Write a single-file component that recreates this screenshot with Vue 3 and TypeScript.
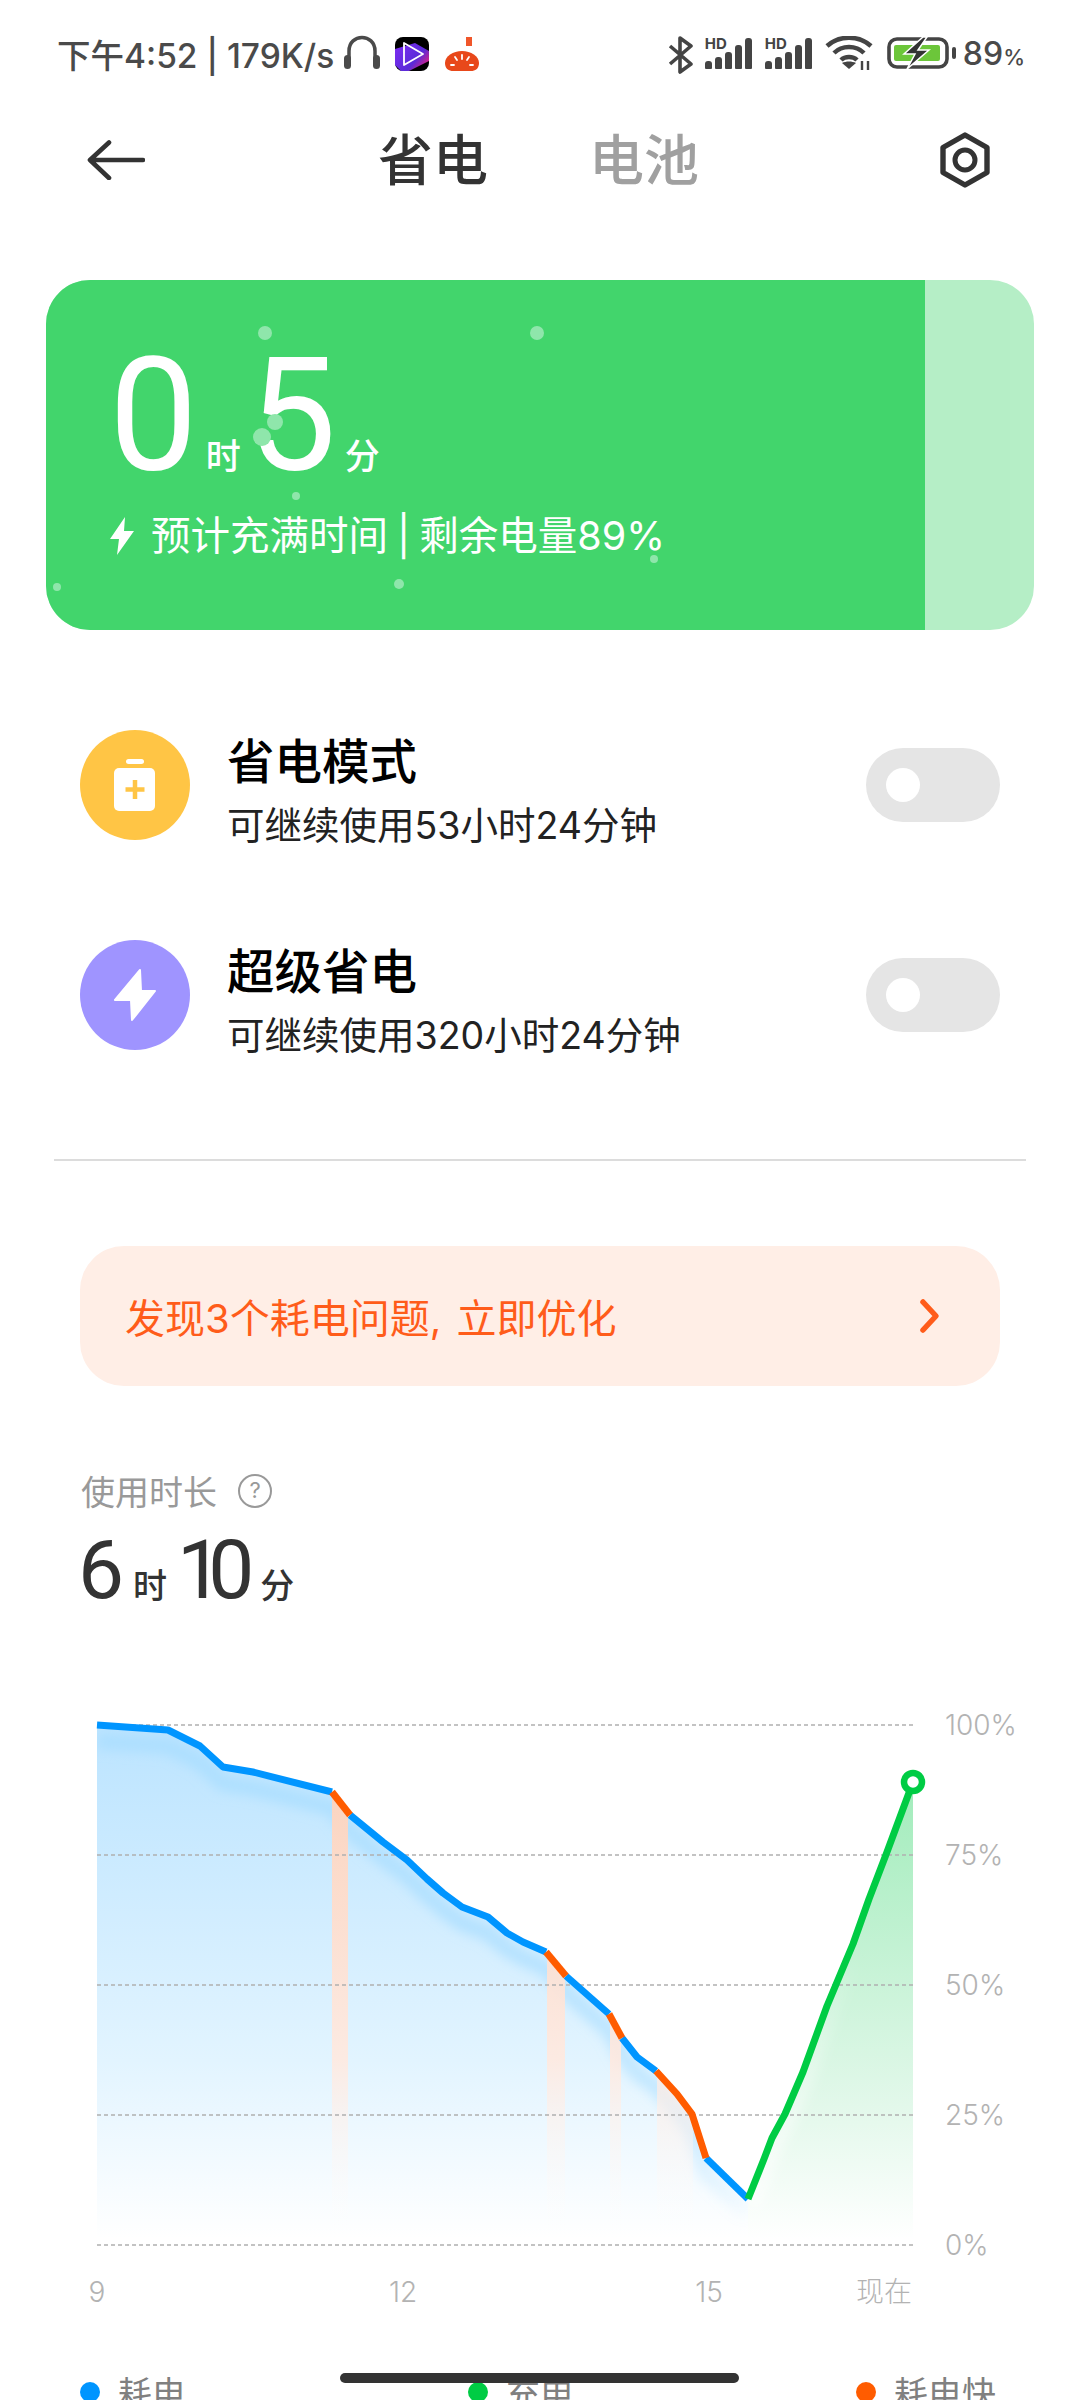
<script setup lang="ts">
type Pt = [number, number]

const toPoints = (list: Pt[]) => list.map((p) => p.join(',')).join(' ')

const blueA: Pt[] = [[97, 1726], [168, 1731], [200, 1747], [223, 1768], [253, 1773], [332, 1793]]
const orangeA: Pt[] = [[332, 1793], [350, 1816]]
const blueB: Pt[] = [[350, 1816], [383, 1843], [407, 1861], [427, 1880], [443, 1894], [462, 1908], [488, 1918], [507, 1934], [523, 1943], [546, 1953]]
const orangeB: Pt[] = [[546, 1953], [566, 1977]]
const blueC: Pt[] = [[566, 1977], [609, 2015]]
const orangeC: Pt[] = [[609, 2015], [622, 2039]]
const blueD: Pt[] = [[622, 2039], [637, 2058], [656, 2072]]
const orangeD: Pt[] = [[656, 2072], [677, 2095], [692, 2115], [706, 2159]]
const blueE: Pt[] = [[706, 2159], [748, 2200]]
const green: Pt[] = [[748, 2200], [764, 2160], [772, 2139], [785, 2115], [803, 2073], [827, 2007], [853, 1945], [869, 1900], [887, 1853], [913, 1783]]

const blueLines = [blueA, blueB, blueC, blueD, blueE].map(toPoints)
const orangeLines = [orangeA, orangeB, orangeC, orangeD].map(toPoints)
const greenLine = toPoints(green)

const allBlue = [...blueA, ...blueB, ...blueC, ...blueD, ...orangeD, ...blueE]
const blueTop = toPoints(allBlue)
const blueArea = toPoints([...allBlue, [748, 2240], [97, 2240]])
const greenArea = toPoints([...green, [913, 2240], [748, 2240]])

const gridLines = [
  { y: 1726, label: '100%' },
  { y: 1856, label: '75%' },
  { y: 1986, label: '50%' },
  { y: 2116, label: '25%' },
  { y: 2246, label: '0%' },
]

const columns = [
  { x: 332, w: 16 },
  { x: 547, w: 18 },
  { x: 610, w: 11 },
  { x: 657, w: 36 },
]

const hours = [
  { x: 97, label: '9' },
  { x: 403, label: '12' },
  { x: 709, label: '15' },
  { x: 884, label: '现在' },
]

const dots = [
  { x: 265, y: 333, r: 7 },
  { x: 537, y: 333, r: 7 },
  { x: 275, y: 422, r: 8 },
  { x: 262, y: 437, r: 9 },
  { x: 296, y: 496, r: 4 },
  { x: 654, y: 559, r: 4 },
  { x: 399, y: 584, r: 5 },
  { x: 57, y: 587, r: 4 },
]

const modes = [
  { title: '省电模式', sub: '可继续使用53小时24分钟', kind: 'battery' },
  { title: '超级省电', sub: '可继续使用320小时24分钟', kind: 'bolt' },
]

const legend = [
  { label: '耗电', color: '#0095ff' },
  { label: '充电', color: '#00cc44' },
  { label: '耗电快', color: '#ff5c00' },
]

const dotStyle = (d: { x: number; y: number; r: number }) => ({
  left: `${d.x - 46 - d.r}px`,
  top: `${d.y - 280 - d.r}px`,
  width: `${d.r * 2}px`,
  height: `${d.r * 2}px`,
})
</script>

<template>
  <div class="page">
    <div class="status">
      <span class="status-text">下午4:52 | 179K/s</span>
      <svg class="ic-head" width="38" height="36" viewBox="0 0 38 36">
        <path d="M6 26V17C6 -1 32 -1 32 17V26" fill="none" stroke="#4a4a4a" stroke-width="3.5" />
        <rect x="1" y="21" width="7" height="14" rx="3.5" fill="#4a4a4a" />
        <rect x="30" y="21" width="7" height="14" rx="3.5" fill="#4a4a4a" />
      </svg>
      <svg class="ic-app" width="34" height="34" viewBox="0 0 34 34">
        <defs>
          <linearGradient id="appGrad" x1="0" y1="0.2" x2="1" y2="0.9">
            <stop offset="0" stop-color="#7a2cf0" />
            <stop offset="0.6" stop-color="#5a2bd8" />
            <stop offset="1" stop-color="#ff1f6e" />
          </linearGradient>
        </defs>
        <rect width="34" height="34" rx="8" fill="#000" />
        <path d="M0 12L20 6L34 14V24L14 34H6L0 28Z" fill="url(#appGrad)" />
        <path d="M9 6L28 17L9 28Z" fill="none" stroke="#fff" stroke-width="1.8" stroke-linejoin="round" />
      </svg>
      <svg class="ic-tomato" width="36" height="36" viewBox="0 0 36 36">
        <rect x="22" y="1" width="6" height="9" fill="#f0562a" />
        <path d="M1 27C1 20 9 15 18 15S35 20 35 27C35 33 31 35 27 35H9C5 35 1 33 1 27Z" fill="#e8481a" />
        <path d="M18 19V23M11 21L13 24M25 21L23 24M7 29H10M26 29H29" stroke="#fff" stroke-width="1.8" stroke-linecap="round" />
      </svg>
      <span class="status-gap"></span>
      <svg class="ic-bt" width="25" height="38" viewBox="0 0 25 38">
        <path d="M2 10L23 28L12 36V2L23 10L2 28" fill="none" stroke="#444" stroke-width="3.6" stroke-linejoin="round" />
      </svg>
      <div v-for="n in 2" :key="n" class="signal">
        <span class="hd">HD</span>
        <i style="height: 8px"></i>
        <i style="height: 12px"></i>
        <i style="height: 17px"></i>
        <i style="height: 24px"></i>
        <i style="height: 31px"></i>
      </div>
      <svg class="ic-wifi" width="48" height="34" viewBox="0 0 48 34">
        <path d="M2 10C14 -1 34 -1 46 10M9 17C17 9 31 9 39 17M16 24C20 20 28 20 32 24" fill="none" stroke="#444" stroke-width="4.500" />
        <path d="M17 27L24 33L31 27C27 25 21 25 17 27Z" fill="#444" />
        <path d="M37 25V34M43 25V34" stroke="#444" stroke-width="2.4" />
      </svg>
      <svg class="ic-batt" width="70" height="32" viewBox="0 0 70 32">
        <rect x="2" y="2" width="58" height="28" rx="8" fill="none" stroke="#444" stroke-width="3.6" />
        <rect x="7" y="8" width="46" height="16" rx="2" fill="#6cc63a" />
        <rect x="65" y="10" width="4" height="12" rx="2" fill="#444" />
        <path d="M36 0L17 17H28L20 32L42 13H31L40 0Z" fill="#333" stroke="#fff" stroke-width="1.5" />
      </svg>
      <span class="status-pct">89<small>%</small></span>
    </div>

    <div class="nav">
      <svg width="58" height="40" viewBox="0 0 58 40">
        <path d="M56 20H4M22 2.5L3 20L22 38" fill="none" stroke="#333" stroke-width="4.6" stroke-linecap="round" stroke-linejoin="round" />
      </svg>
      <div class="tabs">
        <span class="tab active">省电</span>
        <span class="tab">电池</span>
      </div>
      <svg width="52" height="56" viewBox="0 0 52 56">
        <path d="M26 3L48 15.5V40.5L26 53L4 40.5V15.5Z" fill="none" stroke="#333" stroke-width="5.4" stroke-linejoin="round" />
        <circle cx="26" cy="28" r="10" fill="none" stroke="#333" stroke-width="5" />
      </svg>
    </div>

    <div class="card">
      <div class="card-fill"></div>
      <div class="card-body">
        <div class="eta">
          <span class="eta-num">0</span>
          <span class="eta-unit">时</span>
          <span class="eta-num">5</span>
          <span class="eta-unit">分</span>
        </div>
        <div class="eta-sub">
          <svg width="26" height="40" viewBox="0 0 26 40">
            <path d="M16 1L1 23H10L8 39L25 15H15Z" fill="#fff" />
          </svg>
          <span>预计充满时间 | 剩余电量89%</span>
        </div>
      </div>
      <span v-for="(d, i) in dots" :key="i" class="dot" :style="dotStyle(d)"></span>
    </div>

    <div class="modes">
      <div v-for="m in modes" :key="m.title" class="mode">
        <div class="mode-icon" :class="m.kind">
          <svg v-if="m.kind === 'battery'" width="110" height="110" viewBox="0 0 110 110">
            <rect x="46" y="29" width="18" height="5" rx="2.5" fill="#fff" />
            <rect x="34" y="38" width="41" height="43" rx="5" fill="#fff" />
            <path d="M55 50V69M45.500 59.500H64.500" stroke="#ffc545" stroke-width="4.500" />
          </svg>
          <svg v-else width="110" height="110" viewBox="0 0 110 110">
            <path d="M60 30L35 60H51L52 80L75 51H61Z" fill="#fff" stroke="#fff" stroke-width="2" stroke-linejoin="round" />
          </svg>
        </div>
        <div class="mode-text">
          <div class="mode-title">{{ m.title }}</div>
          <div class="mode-sub">{{ m.sub }}</div>
        </div>
        <div class="toggle"><span class="knob"></span></div>
      </div>
    </div>

    <div class="divider"></div>

    <div class="banner">
      <span class="banner-text">发现3个耗电问题, 立即优化</span>
      <svg width="24" height="36" viewBox="0 0 24 36">
        <path d="M5 4L18 18L5 32" fill="none" stroke="#ff5c1a" stroke-width="5.500" stroke-linecap="round" stroke-linejoin="round" />
      </svg>
    </div>

    <div class="usage">
      <div class="usage-label">
        <span>使用时长</span>
        <span class="help">?</span>
      </div>
      <div class="usage-time">
        <span class="usage-num">6</span>
        <span class="usage-unit">时</span>
        <span class="usage-num tight">10</span>
        <span class="usage-unit">分</span>
      </div>
    </div>

    <svg class="chart" width="1080" height="620" viewBox="0 1700 1080 620">
      <defs>
        <linearGradient id="blueFill" gradientUnits="userSpaceOnUse" x1="0" y1="1730" x2="0" y2="2240">
          <stop offset="0" stop-color="#bce4ff" />
          <stop offset="0.65" stop-color="#e2f4ff" />
          <stop offset="1" stop-color="#ffffff" />
        </linearGradient>
        <linearGradient id="blueBand" gradientUnits="userSpaceOnUse" x1="0" y1="1900" x2="0" y2="2210">
          <stop offset="0" stop-color="#a5dcff" stop-opacity="0.7" />
          <stop offset="0.7" stop-color="#a5dcff" stop-opacity="0.5" />
          <stop offset="1" stop-color="#a5dcff" stop-opacity="0" />
        </linearGradient>
        <linearGradient id="greenFill" gradientUnits="userSpaceOnUse" x1="0" y1="1790" x2="0" y2="2240">
          <stop offset="0" stop-color="#a3ecbc" />
          <stop offset="0.7" stop-color="#e2f8ea" />
          <stop offset="1" stop-color="#ffffff" />
        </linearGradient>
        <linearGradient id="peachFill" gradientUnits="userSpaceOnUse" x1="0" y1="1790" x2="0" y2="2240">
          <stop offset="0" stop-color="#ffd3bc" stop-opacity="0.95" />
          <stop offset="0.6" stop-color="#ffe9df" stop-opacity="0.9" />
          <stop offset="1" stop-color="#ffffff" stop-opacity="0" />
        </linearGradient>
        <linearGradient id="greenFade" gradientUnits="userSpaceOnUse" x1="0" y1="1950" x2="0" y2="2200">
          <stop offset="0" stop-color="#ffffff" stop-opacity="0" />
          <stop offset="1" stop-color="#ffffff" stop-opacity="0.7" />
        </linearGradient>
        <clipPath id="blueClip"><polygon :points="blueArea" /></clipPath>
        <clipPath id="greenClip"><polygon :points="greenArea" /></clipPath>
        <filter id="soft" x="-10%" y="-10%" width="120%" height="120%">
          <feGaussianBlur stdDeviation="6" />
        </filter>
      </defs>

      <polygon :points="blueArea" fill="url(#blueFill)" />
      <g clip-path="url(#blueClip)">
        <polyline :points="blueTop" transform="translate(0 16)" fill="none" stroke="url(#blueBand)" stroke-width="16" filter="url(#soft)" />
        <rect v-for="c in columns" :key="c.x" :x="c.x" y="1780" :width="c.w" height="460" fill="url(#peachFill)" />
      </g>
      <polygon :points="greenArea" fill="url(#greenFill)" />
      <g clip-path="url(#greenClip)">
        <polyline :points="greenLine" transform="translate(4 6)" fill="none" stroke="url(#greenFade)" stroke-width="14" filter="url(#soft)" />
      </g>

      <g v-for="g in gridLines" :key="g.y">
        <line x1="97" :y1="g.y" x2="913" :y2="g.y" stroke="#b0b0b0" stroke-width="1.3" stroke-dasharray="4 3" />
        <text x="945" :y="g.y + 10" class="axis">{{ g.label }}</text>
      </g>
      <text v-for="h in hours" :key="h.x" :x="h.x" y="2303" text-anchor="middle" class="axis">{{ h.label }}</text>

      <polyline v-for="(p, i) in blueLines" :key="'b' + i" :points="p" class="line" stroke="#0095ff" />
      <polyline v-for="(p, i) in orangeLines" :key="'o' + i" :points="p" class="line" stroke="#ff5c00" />
      <polyline :points="greenLine" class="line" stroke="#00cc44" />
      <circle cx="913" cy="1783" r="9" fill="#fff" stroke="#00cc44" stroke-width="6.500" />
    </svg>

    <div class="legend">
      <div v-for="l in legend" :key="l.label" class="legend-item">
        <i :style="{ background: l.color }"></i>
        <span>{{ l.label }}</span>
      </div>
    </div>

    <div class="home-bar"></div>
  </div>
</template>

<style>
html,
body {
  margin: 0;
  background: #fff;
}
</style>

<style scoped>
.page {
  position: relative;
  width: 1080px;
  height: 2400px;
  overflow: hidden;
  background: #fff;
  font-family: Inter, "Noto Sans CJK SC", sans-serif;
  color: #000;
}

.status {
  display: flex;
  align-items: center;
  height: 106px;
  padding: 0 55px 0 57px;
  color: #4a4a4a;
}

.status-text {
  font-size: 33.500px;
  font-weight: 500;
  white-space: nowrap;
}

.ic-head {
  margin-left: 9px;
  margin-top: -2px;
}

.ic-app {
  margin-left: 14px;
  margin-top: 2px;
}

.ic-tomato {
  margin-left: 15px;
  margin-top: 2px;
}

.status-gap {
  flex: 1;
}

.ic-bt {
  margin-top: 4px;
}

.signal {
  position: relative;
  display: flex;
  align-items: flex-end;
  gap: 3px;
  width: 50px;
  height: 31px;
  margin-left: 10px;
}

.signal:first-of-type {
  margin-left: 12px;
}

.signal i {
  display: block;
  width: 7px;
  border-radius: 3px 3px 1px 1px;
  background: #444;
}

.hd {
  position: absolute;
  left: 0;
  top: -1px;
  font-size: 15px;
  line-height: 14px;
  font-weight: 700;
  color: #444;
}

.ic-wifi {
  margin-left: 10px;
}

.ic-batt {
  margin-left: 14px;
}

.status-pct {
  margin-left: 6px;
  font-size: 32px;
  font-weight: 500;
  white-space: nowrap;
}

.status-pct small {
  font-size: 22px;
}

.nav {
  display: flex;
  align-items: center;
  justify-content: space-between;
  height: 108px;
  padding: 0 89px 0 87px;
}

.tabs {
  display: flex;
  gap: 101px;
  margin-left: -7px;
}

.tab {
  font-size: 55px;
  line-height: 60px;
  font-weight: 500;
  color: #a0a0a0;
}

.tab.active {
  color: #333;
}

.card {
  position: relative;
  height: 350px;
  margin: 66px 46px 0;
  border-radius: 44px;
  overflow: hidden;
  background: #b5eec6;
}

.card-fill {
  position: absolute;
  left: 0;
  top: 0;
  bottom: 0;
  width: 879px;
  background: #42d56c;
}

.card-body {
  position: relative;
  padding: 60px 0 0 63px;
  color: #fff;
}

.eta {
  display: flex;
  align-items: baseline;
  height: 150px;
}

.eta-num {
  font-family: Roboto, sans-serif;
  font-size: 158px;
  line-height: 150px;
  font-weight: 400;
}

.eta-unit {
  margin: 0 7px 0 8px;
  font-size: 35px;
  line-height: 40px;
  font-weight: 500;
}

.eta-sub {
  display: flex;
  align-items: center;
  gap: 16px;
  margin-top: 21px;
  font-size: 39.500px;
  line-height: 50px;
  word-spacing: -2px;
}

.dot {
  position: absolute;
  border-radius: 50%;
  background: #8fe6ab;
}

.modes {
  display: flex;
  flex-direction: column;
  gap: 100px;
  margin: 100px 80px 0;
}

.mode {
  display: flex;
  align-items: center;
  height: 110px;
}

.mode-icon {
  width: 110px;
  height: 110px;
  border-radius: 50%;
  flex-shrink: 0;
}

.mode-icon.battery {
  background: #ffc545;
}

.mode-icon.bolt {
  background: #9f94ff;
}

.mode-text {
  flex: 1;
  margin-left: 37px;
  margin-top: 10px;
}

.mode-title {
  font-size: 47.500px;
  line-height: 60px;
  font-weight: 500;
}

.mode-sub {
  margin-top: 11px;
  font-size: 37.500px;
  line-height: 46px;
  color: #222;
}

.toggle {
  display: flex;
  align-items: center;
  width: 134px;
  height: 74px;
  padding-left: 20px;
  box-sizing: border-box;
  border-radius: 37px;
  background: #e5e5e5;
}

.knob {
  width: 34px;
  height: 34px;
  border-radius: 50%;
  background: #fff;
}

.divider {
  height: 1.5px;
  margin: 109px 54px 0;
  background: #dcdcdc;
}

.banner {
  display: flex;
  align-items: center;
  justify-content: space-between;
  height: 140px;
  margin: 85px 80px 0;
  padding: 0 58px 0 45px;
  border-radius: 44px;
  background: #ffeee6;
  color: #ff5c1a;
  font-size: 40px;
}

.banner-text {
  word-spacing: 4px;
}

.usage {
  margin: 85px 0 0 78px;
}

.usage-label {
  display: flex;
  align-items: center;
  gap: 21px;
  height: 40px;
  padding-left: 3px;
  font-size: 34px;
  color: #999;
}

.help {
  width: 34px;
  height: 34px;
  box-sizing: border-box;
  border: 2.500px solid #999;
  border-radius: 50%;
  text-align: center;
  font-size: 22px;
  line-height: 29px;
}

.usage-time {
  display: flex;
  align-items: baseline;
  height: 90px;
  margin-top: 14px;
  color: #333;
}

.usage-num {
  font-family: Roboto, sans-serif;
  font-size: 82px;
  line-height: 90px;
  font-weight: 400;
}

.usage-num.tight {
  letter-spacing: -15px;
  margin-right: 12px;
}

.usage-unit {
  margin: 0 10px 0 9px;
  font-size: 34px;
  font-weight: 500;
}

.chart {
  display: block;
  margin-top: 84px;
}

.axis {
  font-size: 28px;
  font-weight: 300;
  fill: #b3b3b3;
}

.line {
  fill: none;
  stroke-width: 7;
  stroke-linejoin: round;
}

.legend {
  display: flex;
  margin-top: 53px;
  padding-left: 80px;
}

.legend-item {
  display: flex;
  flex: none;
  align-items: center;
  gap: 18px;
  width: 388px;
  height: 40px;
  font-size: 34px;
  color: #808080;
}

.legend-item i {
  width: 20px;
  height: 20px;
  border-radius: 50%;
}

.home-bar {
  position: absolute;
  left: 340px;
  top: 2373px;
  width: 399px;
  height: 10px;
  border-radius: 5px;
  background: #333;
}
</style>
